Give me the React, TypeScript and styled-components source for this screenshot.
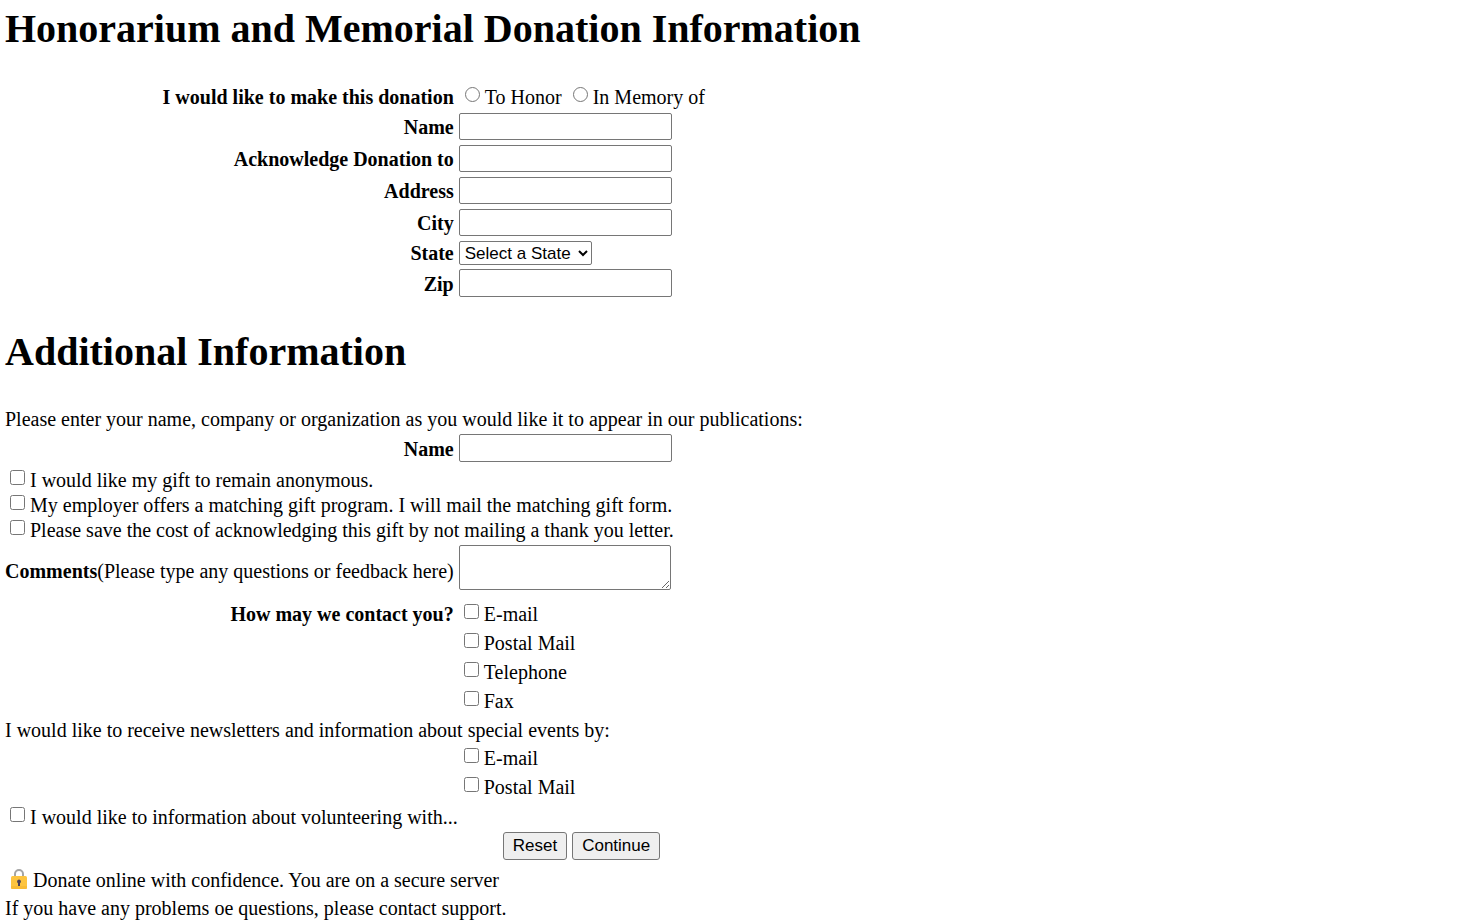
import React from 'react';
import styled, { createGlobalStyle } from 'styled-components';

const GlobalStyle = createGlobalStyle`
  *, *::before, *::after { box-sizing: border-box; }
  body {
    margin: 0;
    background: #fff;
    color: #000;
    font-family: "Liberation Serif", "Times New Roman", serif;
    font-size: 20px;
    line-height: 25px;
  }
`;

const Form = styled.form`
  display: grid;
  grid-template-columns: max-content 1fr;
  column-gap: 5px;
  padding: 6px 5px 0;
`;

const Title = styled.h1<{ $first?: boolean }>`
  grid-column: 1 / -1;
  margin: ${(p) => (p.$first ? '0 0 33px' : '28px 0 32px')};
  font-size: 40px;
  line-height: 46px;
  font-weight: bold;
`;

const Row = styled.div<{ $height: number; $top?: number }>`
  display: grid;
  grid-column: 1 / -1;
  grid-template-columns: subgrid;
  align-content: start;
  align-items: center;
  min-height: ${(p) => p.$height}px;
  padding-top: ${(p) => p.$top ?? 0}px;
`;

const FullRow = styled.div<{ $height: number }>`
  grid-column: 1 / -1;
  min-height: ${(p) => p.$height}px;
`;

const FieldLabel = styled.label`
  grid-column: 1;
  text-align: right;
  font-weight: bold;
`;

const InputLabel = styled(FieldLabel)`
  padding-top: 2px;
`;

const Hint = styled.span`
  font-weight: normal;
`;

const TextInput = styled.input<{ $tall?: boolean }>`
  grid-column: 2;
  width: 213px;
  height: ${(p) => (p.$tall ? 28 : 27)}px;
  border: 1px solid #767676;
  border-radius: 2px;
  padding: 1px 3px;
  font: 17px "Liberation Sans", Arial, sans-serif;
`;

const StateSelect = styled.select`
  grid-column: 2;
  justify-self: start;
  align-self: start;
  width: 133px;
  height: 24px;
  padding: 0 1px;
  border: 1px solid #767676;
  border-radius: 2px;
  background: #fff;
  color: #000;
  font: 17px "Liberation Sans", Arial, sans-serif;
`;

const Comments = styled.textarea`
  grid-column: 2;
  width: 212px;
  height: 45px;
  margin: 0 0 8px;
  padding: 3px;
  border: 1px solid #767676;
  border-radius: 2px;
  resize: both;
  font: 17px "Liberation Mono", monospace;
`;

const Choices = styled.div`
  grid-column: 2;
  display: flex;
  gap: 6px;
  padding-left: 1px;
`;

const Choice = styled.label`
  grid-column: 2;
  display: flex;
  align-items: flex-start;
  justify-self: start;
  width: max-content;
`;

const Tick = styled.input`
  width: 15px;
  height: 15px;
  margin: 2px 5px 0;
`;

const Actions = styled.div`
  grid-column: 2;
  display: flex;
  gap: 5px;
  padding-left: 44px;
`;

const Button = styled.button`
  height: 28px;
  padding: 0 9px;
  border: 1px solid #767676;
  border-radius: 3px;
  background: #efefef;
  color: #000;
  font: 17px "Liberation Sans", Arial, sans-serif;
`;

const Secure = styled(FullRow)`
  display: flex;
  align-items: flex-start;
  gap: 5px;
  padding-left: 5px;
`;

const LockIcon = () => (
  <svg width="18" height="22" viewBox="0 0 18 22" aria-hidden="true">
    <path d="M5 9V6a4 4 0 0 1 8 0v3" fill="none" stroke="#a5a5a5" strokeWidth="2" />
    <rect x="1" y="8" width="16" height="13" rx="1.5" fill="#fdc43f" />
    <path d="M1 18h16v1.500a1.500 1.500 0 0 1-1.500 1.500h-13A1.500 1.500 0 0 1 1 19.500z" fill="#f9bb35" />
    <path d="M9 11.500a2 2 0 0 1 1 3.700V18H8v-2.800a2 2 0 0 1 1-3.700z" fill="#4b4059" />
  </svg>
);

type TextFieldProps = { id: string; label: string; height?: number; tall?: boolean };

const TextField = ({ id, label, height = 32, tall }: TextFieldProps) => (
  <Row $height={height}>
    <InputLabel htmlFor={id}>{label}</InputLabel>
    <TextInput id={id} name={id} type="text" $tall={tall} />
  </Row>
);

const CheckBox = ({ name, children }: { name: string; children: React.ReactNode }) => (
  <Choice>
    <Tick type="checkbox" name={name} />
    {children}
  </Choice>
);

export default function App() {
  return (
    <>
      <GlobalStyle />
      <Form onSubmit={(e) => e.preventDefault()}>
        <Title $first>Honorarium and Memorial Donation Information</Title>
        <Row $height={28} role="radiogroup" aria-labelledby="kind">
          <FieldLabel as="span" id="kind">I would like to make this donation</FieldLabel>
          <Choices>
            <Choice><Tick type="radio" name="kind" value="honor" />To Honor</Choice>
            <Choice><Tick type="radio" name="kind" value="memory" />In Memory of</Choice>
          </Choices>
        </Row>
        <TextField id="name" label="Name" />
        <TextField id="acknowledge" label="Acknowledge Donation to" />
        <TextField id="address" label="Address" />
        <TextField id="city" label="City" />
        <Row $height={28}>
          <FieldLabel htmlFor="state">State</FieldLabel>
          <StateSelect id="state" name="state">
            <option>Select a State</option>
          </StateSelect>
        </Row>
        <TextField id="zip" label="Zip" tall />

        <Title>Additional Information</Title>
        <FullRow $height={27}>
          Please enter your name, company or organization as you would like it to appear in our publications:
        </FullRow>
        <TextField id="publishedName" label="Name" height={34} tall />
        <FullRow $height={25}><CheckBox name="anonymous">I would like my gift to remain anonymous.</CheckBox></FullRow>
        <FullRow $height={25}><CheckBox name="matching">My employer offers a matching gift program. I will mail the matching gift form.</CheckBox></FullRow>
        <FullRow $height={25}><CheckBox name="noLetter">Please save the cost of acknowledging this gift by not mailing a thank you letter.</CheckBox></FullRow>
        <Row $height={59} $top={2}>
          <FieldLabel htmlFor="comments">Comments<Hint>(Please type any questions or feedback here)</Hint></FieldLabel>
          <Comments id="comments" name="comments" rows={2} />
        </Row>
        <Row $height={29}>
          <FieldLabel as="span">How may we contact you?</FieldLabel>
          <CheckBox name="contactEmail">E-mail</CheckBox>
        </Row>
        <Row $height={29}><CheckBox name="contactPost">Postal Mail</CheckBox></Row>
        <Row $height={29}><CheckBox name="contactPhone">Telephone</CheckBox></Row>
        <Row $height={29}><CheckBox name="contactFax">Fax</CheckBox></Row>
        <FullRow $height={28}>I would like to receive newsletters and information about special events by:</FullRow>
        <Row $height={29}><CheckBox name="newsEmail">E-mail</CheckBox></Row>
        <Row $height={30}><CheckBox name="newsPost">Postal Mail</CheckBox></Row>
        <FullRow $height={27}><CheckBox name="volunteer">I would like to information about volunteering with...</CheckBox></FullRow>
        <Row $height={36}>
          <Actions>
            <Button type="reset">Reset</Button>
            <Button type="submit">Continue</Button>
          </Actions>
        </Row>
        <Secure $height={28}><LockIcon />Donate online with confidence. You are on a secure server</Secure>
        <FullRow $height={25}>If you have any problems oe questions, please contact support.</FullRow>
      </Form>
    </>
  );
}
